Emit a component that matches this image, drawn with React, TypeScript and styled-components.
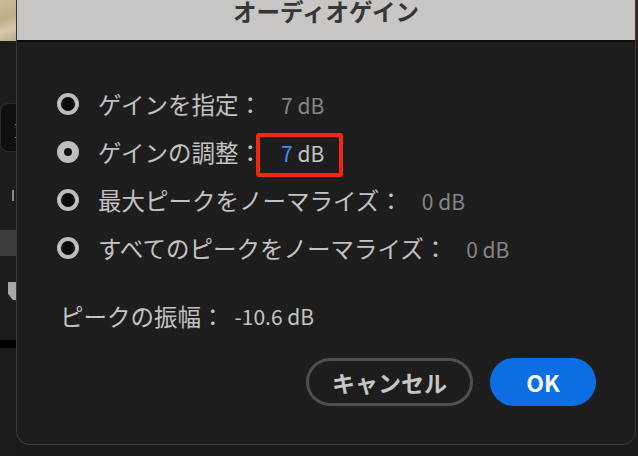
import React from "react";
import styled, { createGlobalStyle } from "styled-components";

const GlobalStyle = createGlobalStyle`
  html, body {
    margin: 0;
    padding: 0;
    background: #1a1a1a;
  }
  body {
    font-family: "Noto Sans CJK JP", "Noto Sans", sans-serif;
  }
`;

const Page = styled.div`
  width: 638px;
  height: 456px;
  display: flex;
  overflow: hidden;
  background: #1a1a1a;
`;

const Strip = styled.div`
  width: 16px;
  flex-shrink: 0;
  display: flex;
  flex-direction: column;
  background: #1c1c1c;
`;

const StripBlock = styled.div<{ $h: number; $bg?: string; $mt?: number }>`
  height: ${(p) => p.$h}px;
  margin-top: ${(p) => p.$mt ?? 0}px;
  background: ${(p) => p.$bg ?? "transparent"};
  flex-shrink: 0;
`;

const Photo = styled(StripBlock)`
  background: linear-gradient(160deg, #cdbf9e 0%, #bfae88 45%, #d6cbb0 70%, #b9a985 100%);
`;

const DarkPanel = styled(StripBlock)`
  background: #0f0f0f;
  border-radius: 8px 0 0 8px;
  border: 1px solid #2a2a2a;
  border-right: none;
  position: relative;
  &::after {
    content: "";
    position: absolute;
    right: 0;
    top: 20px;
    width: 1px;
    height: 12px;
    border-top: 1px solid #777;
    border-bottom: 1px solid #777;
  }
`;

const Tick = styled(StripBlock)`
  width: 2px;
  margin-left: 12px;
  background: #8a8a8a;
`;

const Thumb = styled(StripBlock)`
  width: 8px;
  margin-left: 8px;
  background: #a8a8a8;
  clip-path: polygon(0 0, 100% 0, 100% 100%, 60% 100%, 0 65%);
`;

const RightEdge = styled.div`
  width: 2px;
  flex-shrink: 0;
  background: linear-gradient(#3b2a24 0 40px, #1c1c1c 40px);
`;

const Dialog = styled.div`
  width: 620px;
  height: 445px;
  flex-shrink: 0;
  display: flex;
  flex-direction: column;
  background: #1d1d1d;
  border: 1px solid #3a3a3a;
  border-top: none;
  border-radius: 0 0 14px 14px;
  box-sizing: border-box;
  overflow: hidden;
`;

const TitleBar = styled.div`
  height: 40px;
  flex-shrink: 0;
  margin: 0 -1px;
  background: #c8c7c5;
  border-bottom: 2px solid #0e0e0e;
  text-align: center;
  font-size: 23.5px;
  line-height: 22px;
  font-weight: 700;
  color: #363636;
`;

const Body = styled.div`
  flex: 1;
  display: flex;
  flex-direction: column;
  padding: 38px 39px 38px 40px;
`;

const RadioList = styled.div`
  display: flex;
  flex-direction: column;
`;

const Row = styled.label`
  height: 48px;
  display: flex;
  align-items: center;
  gap: 19px;
`;

const Radio = styled.span<{ $checked?: boolean }>`
  width: 22px;
  height: 22px;
  box-sizing: border-box;
  border-radius: 50%;
  border: 4px solid #bdbdbd;
  background: ${(p) => (p.$checked ? "#bdbdbd" : "#0d0d0d")};
  display: flex;
  align-items: center;
  justify-content: center;
  flex-shrink: 0;
  &::after {
    content: "";
    display: ${(p) => (p.$checked ? "block" : "none")};
    width: 8px;
    height: 8px;
    border-radius: 50%;
    background: #111;
  }
`;

const Label = styled.span`
  font-size: 23.5px;
  color: #c2c2c2;
  white-space: nowrap;
`;

const Value = styled.span<{ $tone?: "dim" | "bright" }>`
  margin-left: 19px;
  font-size: 21px;
  color: ${(p) => (p.$tone === "bright" ? "#c4c4c4" : "#858585")};
  white-space: nowrap;
  position: relative;
`;

const Highlight = styled.span`
  position: absolute;
  left: -25px;
  right: -19px;
  top: -5px;
  bottom: -9px;
  border: 4px solid #f2270f;
  border-radius: 3px;
`;

const Accent = styled.span`
  color: #3f8ff0;
`;

const PeakRow = styled.div`
  margin-top: 29px;
  margin-left: 3px;
  height: 30px;
  display: flex;
  align-items: center;
`;

const PeakValue = styled(Value)`
  margin-left: 10px;
`;

const Buttons = styled.div`
  margin-top: auto;
  display: flex;
  justify-content: flex-end;
  gap: 17px;
`;

const Button = styled.button<{ $primary?: boolean }>`
  height: 48px;
  box-sizing: border-box;
  border-radius: 24px;
  font-family: "Noto Sans CJK JP", "Noto Sans", sans-serif;
  font-weight: 700;
  font-size: 23px;
  line-height: 1;
  padding: 0;
  cursor: pointer;
  width: ${(p) => (p.$primary ? "106px" : "167px")};
  background: ${(p) => (p.$primary ? "#0b6fe3" : "transparent")};
  border: ${(p) => (p.$primary ? "none" : "3px solid #4e4e4e")};
  color: ${(p) => (p.$primary ? "#ffffff" : "#c6c6c6")};
`;

const options = [
  { label: "ゲインを指定：", value: "7 dB" },
  { label: "ゲインの調整：", value: "7 dB", checked: true },
  { label: "最大ピークをノーマライズ：", value: "0 dB" },
  { label: "すべてのピークをノーマライズ：", value: "0 dB" },
];

export default function App() {
  return (
    <>
      <GlobalStyle />
      <Page>
        <Strip>
          <Photo $h={41} />
          <DarkPanel $h={47} $mt={62} />
          <Tick $h={11} $mt={38} />
          <StripBlock $h={26} $mt={29} $bg="#3c3c3c" />
          <Thumb $h={18} $mt={26} />
          <StripBlock $h={8} $mt={40} $bg="#000" />
        </Strip>
        <Dialog>
          <TitleBar>オーディオゲイン</TitleBar>
          <Body>
            <RadioList>
              {options.map((o) => (
                <Row key={o.label}>
                  <Radio $checked={o.checked} />
                  <Label>
                    {o.label}
                    {o.checked ? (
                      <Value $tone="bright">
                        <Highlight />
                        <Accent>7</Accent> dB
                      </Value>
                    ) : (
                      <Value>{o.value}</Value>
                    )}
                  </Label>
                </Row>
              ))}
            </RadioList>
            <PeakRow>
              <Label>ピークの振幅：</Label>
              <PeakValue $tone="bright">-10.6 dB</PeakValue>
            </PeakRow>
            <Buttons>
              <Button>キャンセル</Button>
              <Button $primary>OK</Button>
            </Buttons>
          </Body>
        </Dialog>
        <RightEdge />
      </Page>
    </>
  );
}
